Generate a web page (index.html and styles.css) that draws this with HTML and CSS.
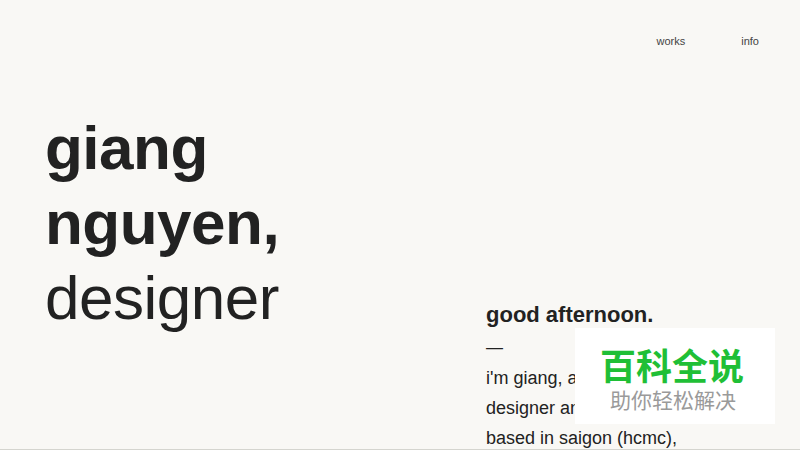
FILE: index.html
```html
<!DOCTYPE html>
<html lang="en">
<head>
<meta charset="utf-8">
<title>giang nguyen, designer</title>
<link rel="stylesheet" href="styles.css">
</head>
<body>
<div class="page">
  <header class="topbar">
    <nav class="nav">
      <a class="nav-link" href="#">works</a>
      <a class="nav-link" href="#">info</a>
    </nav>
  </header>
  <main class="hero">
    <h1 class="title"><strong>giang<br>nguyen,</strong><br>designer</h1>
    <section class="intro">
      <h2 class="greeting">good afternoon.</h2>
      <p class="dash">—</p>
      <p class="bio">i'm giang, a visual<br>designer and illustrator<br>based in saigon (hcmc),<br>vietnam.</p>
    </section>
  </main>
  <div class="watermark">
    <div class="wm-title">百科全说</div>
    <div class="wm-sub">助你轻松解决</div>
  </div>
</div>
</body>
</html>
```
FILE: styles.css
```css
html, body {
  margin: 0;
  padding: 0;
  overflow: hidden;
}
body {
  background: #f9f8f5;
  color: #222222;
  font-family: "Liberation Sans", Arial, sans-serif;
}
.page {
  position: relative;
  height: 449px;
  overflow: hidden;
  border-bottom: 1px solid #d5d5cf;
  box-sizing: content-box;
}
.topbar {
  display: flex;
  justify-content: flex-end;
  padding: 33px 41px 0 45px;
}
.nav {
  display: flex;
  gap: 56px;
}
.nav-link {
  font-size: 11px;
  line-height: 16px;
  color: #444444;
  text-decoration: none;
}
.hero {
  display: grid;
  grid-template-columns: 441px 1fr;
  padding: 0 41px 0 45px;
}
.title {
  margin: 61px 0 0 0;
  font-size: 62px;
  line-height: 75px;
  font-weight: 400;
  letter-spacing: -0.5px;
  color: #222222;
}
.title strong {
  font-weight: 700;
}
.intro {
  margin-top: 251px;
}
.greeting {
  margin: 0;
  font-size: 22px;
  line-height: 30px;
  font-weight: 700;
  color: #222222;
}
.dash {
  margin: 3px 0 0 0;
  font-size: 17px;
  line-height: 30px;
}
.bio {
  margin: 0;
  font-size: 18px;
  line-height: 30px;
  color: #222222;
}
.watermark {
  position: absolute;
  left: 575px;
  top: 328px;
  width: 200px;
  height: 96px;
  background: #ffffff;
  display: flex;
  flex-direction: column;
  align-items: center;
  font-family: "Noto Sans CJK SC", sans-serif;
}
.wm-title {
  margin-top: 16px;
  margin-left: -6px;
  font-size: 36px;
  line-height: 40px;
  font-weight: 700;
  color: #1fbf36;
}
.wm-sub {
  margin-top: 2px;
  margin-left: -4px;
  font-size: 21px;
  line-height: 26px;
  color: #9a9a9a;
}
```
